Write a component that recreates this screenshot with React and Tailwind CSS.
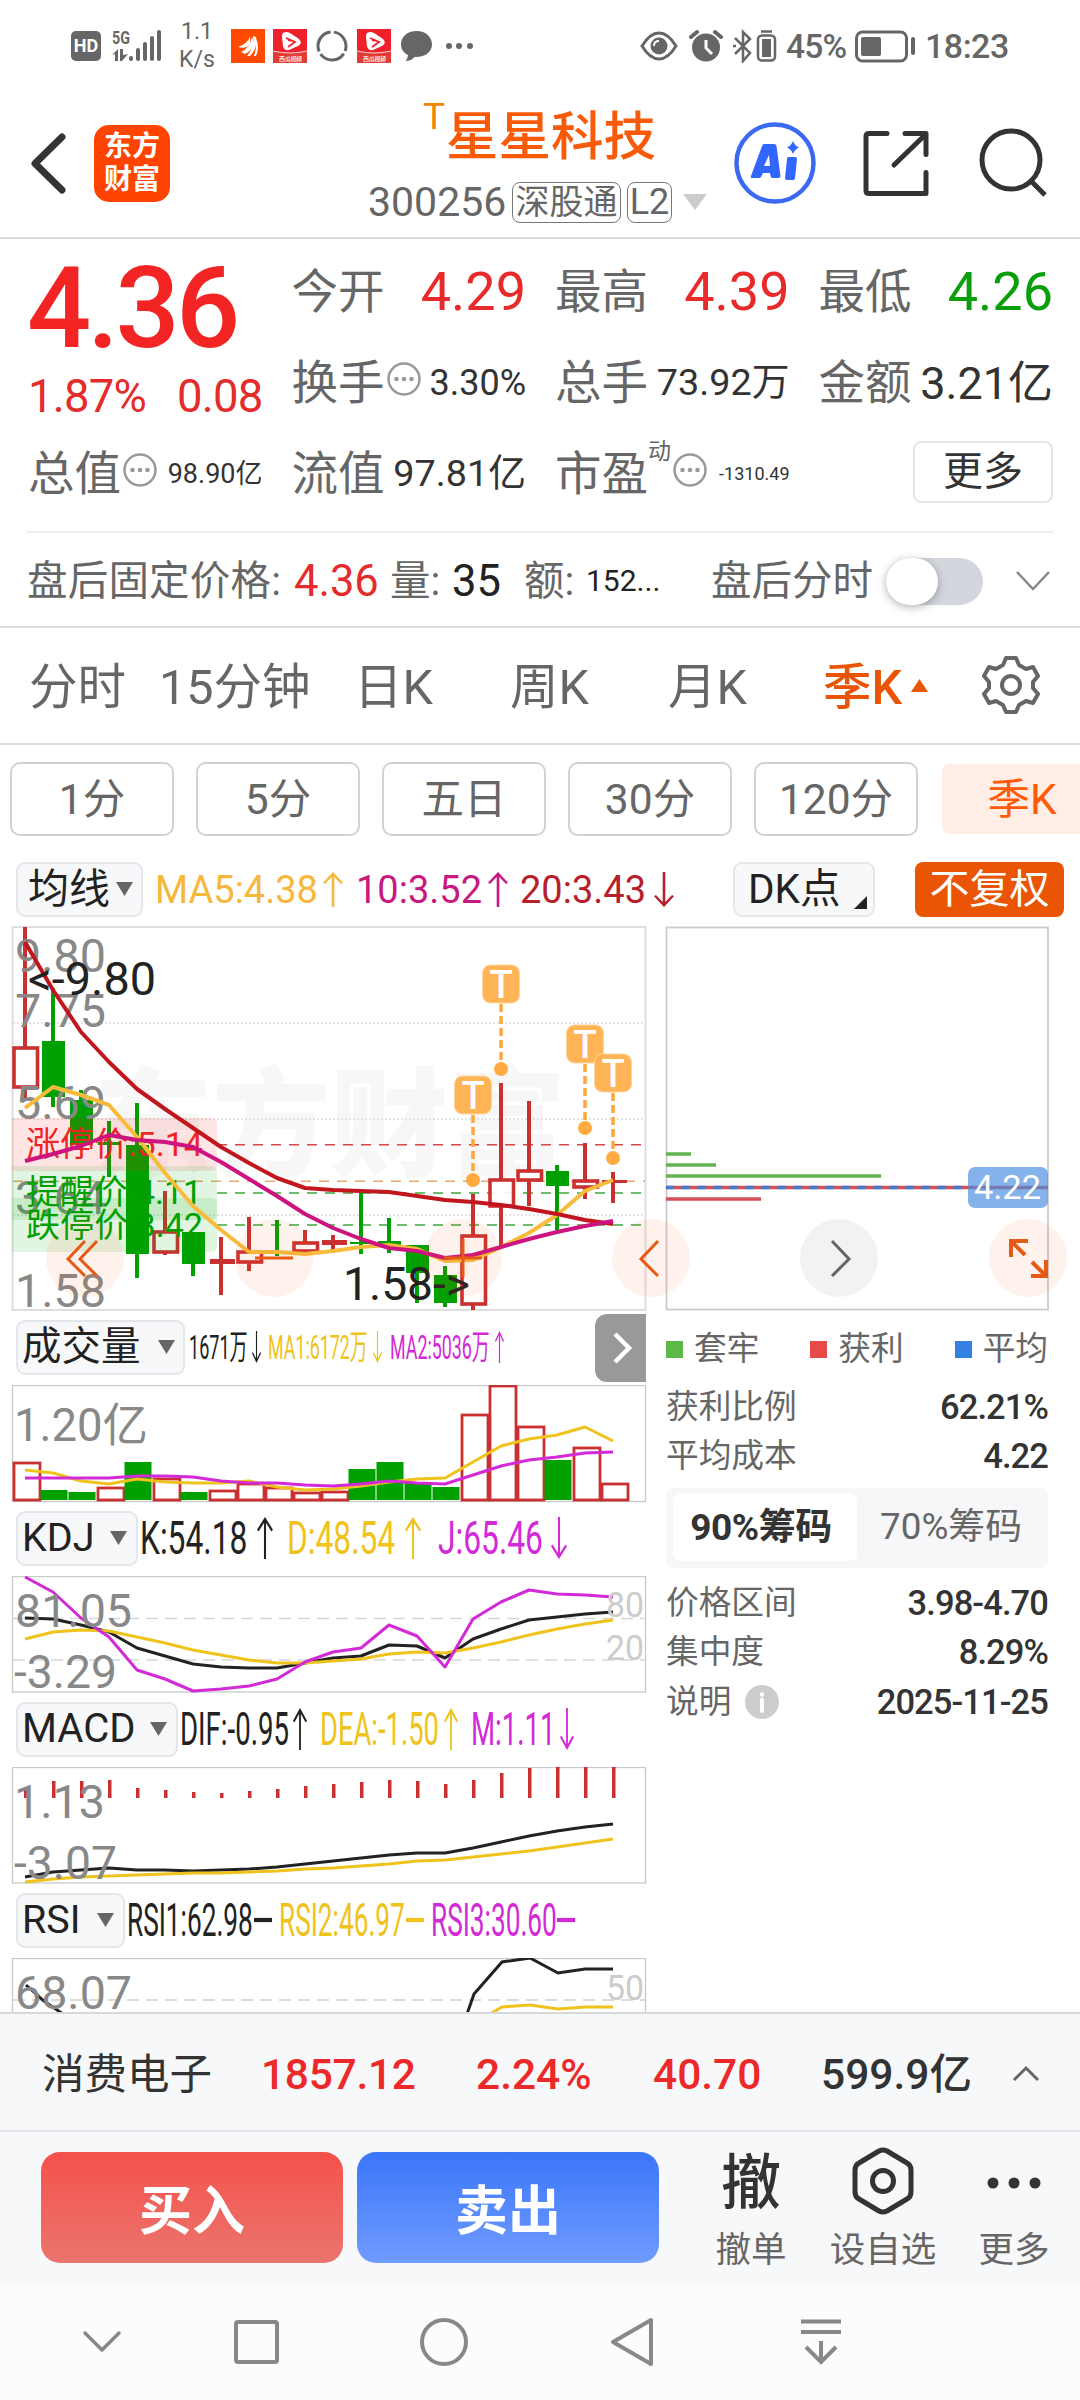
import clsx from 'clsx'

/* ── Series data (pixel space of the K-line canvas) ───────────────── */
const RED = '#cb3030'
const GREEN = '#00a000'
const cx = i => 25 + i * 28

// [type, high, bodyTop, bodyBottom, low]
const CANDLES = [
  ['r', 927, 1048, 1087, 1098], ['g', 988, 1041, 1097, 1107], ['g', 1090, 1100, 1145, 1148],
  ['g', 1121, 1142, 1145, 1177], ['g', 1103, 1145, 1254, 1278], ['r', 1191, 1232, 1252, 1255],
  ['g', 1232, 1232, 1264, 1276], ['R', 1237, 1259, 1264, 1295], ['r', 1217, 1252, 1262, 1271],
  ['g', 1220, 1252, 1254, 1256], ['r', 1230, 1243, 1251, 1253], ['R', 1235, 1240, 1245, 1253],
  ['g', 1193, 1242, 1244, 1254], ['g', 1218, 1241, 1245, 1253], ['g', 1245, 1245, 1273, 1303],
  ['g', 1266, 1275, 1303, 1307], ['r', 1194, 1236, 1304, 1310], ['r', 1083, 1180, 1206, 1247],
  ['r', 1101, 1171, 1180, 1206], ['g', 1165, 1171, 1186, 1230], ['r', 1143, 1181, 1187, 1199],
  ['R', 1172, 1180, 1183, 1203],
]
const MA5 = [1108, 1087, 1095, 1105, 1137, 1173, 1206, 1230, 1252, 1252, 1254, 1251, 1247, 1245, 1249, 1261, 1260, 1247, 1233, 1215, 1191, 1180]
const MA10 = [1161, 1154, 1146, 1135, 1140, 1142, 1147, 1162, 1179, 1196, 1214, 1228, 1239, 1248, 1251, 1258, 1255, 1247, 1239, 1232, 1226, 1221]
const MA20 = [942, 990, 1032, 1062, 1089, 1109, 1128, 1147, 1163, 1178, 1188, 1190, 1191, 1192, 1196, 1200, 1202, 1205, 1209, 1214, 1220, 1224]

const VOLUMES = [
  ['r', 1463], ['g', 1490], ['g', 1492], ['r', 1488], ['g', 1462], ['r', 1479], ['g', 1492], ['r', 1491],
  ['r', 1484], ['r', 1488], ['r', 1493], ['r', 1492], ['g', 1469], ['g', 1462], ['g', 1483], ['g', 1487],
  ['r', 1415], ['r', 1386], ['r', 1427], ['g', 1460], ['r', 1448], ['r', 1484],
]
const VOL_MA1 = [1470, 1473, 1481, 1484, 1479, 1482, 1483, 1483, 1481, 1487, 1490, 1489, 1486, 1482, 1479, 1478, 1462, 1446, 1439, 1435, 1427, 1441]
const VOL_MA2 = [1478, 1478, 1478, 1478, 1476, 1476, 1477, 1481, 1483, 1483, 1485, 1486, 1484, 1481, 1483, 1484, 1475, 1466, 1460, 1457, 1453, 1452]

const KDJ_K = [1618, 1619, 1625, 1632, 1648, 1656, 1664, 1667, 1668, 1668, 1663, 1658, 1656, 1645, 1646, 1658, 1639, 1629, 1620, 1617, 1614, 1612]
const KDJ_D = [1639, 1632, 1630, 1631, 1637, 1643, 1650, 1655, 1660, 1663, 1663, 1661, 1659, 1654, 1652, 1653, 1648, 1642, 1635, 1629, 1624, 1620]
const KDJ_J = [1577, 1592, 1618, 1637, 1670, 1679, 1691, 1689, 1686, 1679, 1662, 1652, 1648, 1625, 1636, 1667, 1619, 1602, 1590, 1594, 1595, 1597]

const MACD_BARS = [1787, 1781, 1781, 1780, 1788, 1790, 1792, 1793, 1791, 1789, 1786, 1784, 1782, 1780, 1781, 1784, 1780, 1773, 1768, 1767, 1767, 1767]
const DIF = [1877, 1872, 1870, 1868, 1870, 1870, 1871, 1870, 1869, 1867, 1864, 1861, 1858, 1855, 1853, 1853, 1848, 1842, 1836, 1831, 1827, 1824]
const DEA = [1882, 1879, 1877, 1876, 1875, 1874, 1873, 1873, 1872, 1871, 1869, 1868, 1866, 1864, 1861, 1860, 1857, 1854, 1851, 1847, 1843, 1839]

const T_MARKS = [[501, 984, 1069], [473, 1095, 1180], [585, 1044, 1128], [613, 1073, 1158]]

const TABS = [
  ['分时', 'w-[96px]'], ['15分钟', 'w-[150px] ml-[34px]'], ['日K', 'w-[78px] ml-[45px]'],
  ['周K', 'w-[80px] ml-[78px]'], ['月K', 'w-[80px] ml-[78px]'],
]

function Line({ data, color, width = 3.5 }) {
  return (
    <polyline
      points={data.map((y, i) => `${cx(i)},${y}`).join(' ')}
      fill="none" stroke={color} strokeWidth={width} strokeLinejoin="round"
    />
  )
}

function SvgText({ x, y, len, size = 46, fill = '#888', children, ...rest }) {
  return (
    <text x={x} y={y} textLength={len} lengthAdjust="spacingAndGlyphs" fontSize={size} fill={fill} {...rest}>
      {children}
    </text>
  )
}

function Frame({ y, h }) {
  return <rect x="12.5" y={y} width="633" height={h} fill="none" stroke="#c9c9c9" strokeWidth="1.3" />
}

/* ── Status bar ───────────────────────────────────────────────────── */
function VideoAppIcon({ className }) {
  return (
    <svg className={className} width="34" height="34" viewBox="0 0 34 34">
      <rect width="34" height="34" fill="#f01f2c" />
      <path d="M0 22q17 4 34 0v12H0z" fill="#e23a35" />
      <path d="M0 22q17 4 34 0" fill="none" stroke="#fff" strokeWidth="0.8" />
      <path d="M10 4q3-2 7 0l9 6q4 4-1 7l-9 4q-5 1-6-4l-1-9q0-3 1-4z" fill="#fff" />
      <path d="M13 9l9 4-7 5M18 12l-3-1" fill="none" stroke="#f01f2c" strokeWidth="1.8" />
      <text x="6" y="31.500" fontSize="6" fill="#fff" fontWeight="500" textLength="23">西瓜视频</text>
    </svg>
  )
}

function StatusBar() {
  return (
    <div className="flex h-[92px] items-center pl-[71px] text-[#666]">
      <div className="flex h-[30px] w-[30px] items-center justify-center rounded-[5px] bg-[#666] text-[19px] font-bold leading-none text-white">
        <span className="scale-x-95">HD</span>
      </div>
      <svg className="ml-[10px]" width="52" height="34" viewBox="111 30 52 34" fill="#666">
        <text x="112" y="45" fontSize="19" fontWeight="700" textLength="18" lengthAdjust="spacingAndGlyphs">5G</text>
        <path d="M112 56l6-6v12h-3v-7zM120 50h3v6l5-1-6 7h-2z" />
        <rect x="129" y="57" width="4" height="5" rx="2" />
        <rect x="136" y="49" width="4" height="13" rx="2" />
        <rect x="143" y="43" width="4" height="19" rx="2" />
        <rect x="150" y="37" width="4" height="25" rx="2" />
        <rect x="157" y="31" width="4" height="31" rx="2" />
      </svg>
      <div className="ml-[17px] flex w-[34px] flex-col items-center text-[23px] leading-[28px]">
        <span>1.1</span>
        <span>K/s</span>
      </div>
      <svg className="ml-[17px]" width="34" height="34" viewBox="0 0 34 34">
        <rect width="34" height="34" fill="#ff4a00" />
        <path d="M7 18q9-3 12-10 1 5-1 8-3 4-11 2z" fill="#fff" />
        <path d="M10 23q9-4 11-15 5 11-7 17zM16 27q8-9 6-20l3 1q2 11-6 19zM23 27q3-9 2-18 4 9 0 18z" fill="#fff" />
      </svg>
      <VideoAppIcon className="ml-[8px]" />
      <svg className="ml-[9px]" width="32" height="34" viewBox="0 0 32 34" fill="none" stroke="#666" strokeWidth="3">
        <circle cx="16" cy="17" r="14" strokeDasharray="25 3 27 3 26 4" transform="rotate(-82 16 17)" />
      </svg>
      <VideoAppIcon className="ml-[9px]" />
      <svg className="ml-[9px]" width="33" height="34" viewBox="0 0 33 34" fill="#666">
        <path d="M16.500 2C7 2 1 8 1 15.500c0 5 3 8.500 7 10.500-.5 3-1 4.500-2.500 6 4 0 7-1.500 9-4C25 28.500 32 23 32 15.500 32 8 26 2 16.500 2z" />
      </svg>
      <svg className="ml-[12px]" width="28" height="8" viewBox="0 0 28 8" fill="#666">
        <circle cx="4" cy="4" r="3" /><circle cx="14" cy="4" r="3" /><circle cx="25" cy="4" r="3" />
      </svg>
      <svg className="ml-[167px]" width="38" height="34" viewBox="0 0 38 34" fill="none" stroke="#666" strokeWidth="3">
        <path d="M2 17Q10 4 19 4t17 13Q28 30 19 30T2 17z" />
        <circle cx="19" cy="17" r="8.500" fill="#666" stroke="none" />
        <path d="M14 17q0-5 5-5" stroke="#fff" strokeWidth="1.800" />
      </svg>
      <svg className="ml-[11px]" width="34" height="34" viewBox="0 0 34 34" fill="#666">
        <circle cx="17" cy="18.500" r="14" />
        <path d="M2 8l6-5M26 3l6 5" stroke="#666" strokeWidth="4" strokeLinecap="round" />
        <path d="M17 11v8l6 6" fill="none" stroke="#fff" strokeWidth="3" />
      </svg>
      <svg className="ml-[9px]" width="46" height="34" viewBox="732 29 46 34" fill="none" stroke="#666" strokeWidth="2.500">
        <path d="M735 38l15 15-7 8V32l7 7-15 15M733 46h3" />
        <rect x="758" y="35.500" width="17" height="25" rx="4" />
        <rect x="762" y="39" width="9" height="18" fill="#666" stroke="none" />
        <path d="M761 31.500h11" />
      </svg>
      <span className="ml-[8px] w-[62px] pt-px text-[33.500px] font-medium leading-none tracking-[-0.8px]">45%</span>
      <svg className="ml-[6px]" width="62" height="34" viewBox="854 29 62 34" fill="none" stroke="#666" strokeWidth="3">
        <rect x="856.500" y="32" width="50" height="29" rx="6" />
        <rect x="861" y="37" width="20" height="19" rx="2" fill="#666" stroke="none" />
        <path d="M913 39v14" strokeWidth="4" strokeLinecap="round" />
      </svg>
      <span className="ml-[9px] pt-px text-[34px] font-medium leading-none tracking-[-0.500px]">18:23</span>
    </div>
  )
}

/* ── Title bar ────────────────────────────────────────────────────── */
function TitleBar() {
  return (
    <div className="flex h-[147px] items-start border-b-2 border-[#dcdcdc]">
      <svg className="ml-[28px] mt-[38px]" width="42" height="68" viewBox="28 130 42 68" fill="none" stroke="#333" strokeWidth="7" strokeLinecap="round" strokeLinejoin="round">
        <path d="M62 137L35 163.500 62 190" />
      </svg>
      <div className="ml-[24px] mt-[33px] flex h-[77px] w-[76px] flex-col items-center justify-center rounded-[15px] bg-[#ff4300] text-[28px] font-bold leading-[33px] text-white">
        <span>东方</span>
        <span>财富</span>
      </div>
      <div className="ml-[198px] flex w-[341px] flex-col">
        <div className="flex h-[85px] items-start pl-[55px]">
          <span className="mt-[6px] w-[23px] text-[37px] leading-none text-[#f08500]">T</span>
          <span className="mt-[19px] whitespace-nowrap text-[52.500px] font-medium leading-none text-[#f85a08]">星星科技</span>
        </div>
        <div className="flex h-[51px] items-center text-[#666]">
          <span className="w-[144px] text-[41px] leading-none">300256</span>
          <span className="flex h-[41px] w-[109px] items-center justify-center rounded-[8px] border border-[#777] text-[34px] leading-none">深股通</span>
          <span className="ml-[6px] flex h-[41px] w-[45px] items-center justify-center rounded-[8px] border border-[#777] text-[36px] leading-none">L2</span>
          <svg className="ml-[10px]" width="26" height="18" viewBox="0 0 26 18" fill="#ccc"><path d="M1 1h24L13 17z" /></svg>
        </div>
      </div>
      <svg className="ml-[25px] mt-[30px]" width="82" height="82" viewBox="734 122 82 82">
        <circle cx="775" cy="163" r="38.500" fill="none" stroke="#3b6af0" strokeWidth="4.500" />
        <g fill="#3366ff">
          <path fillRule="evenodd" d="M764 144h10q2 0 2.500 2l4 30q0 2-2 2h-6q-2 0-2-2l-.5-3h-7l-2 4q-.5 1-2 1h-7q-2 0-1-2l11-30q1-2 2-2zM769 155l-5 11h6z" />
          <path d="M788 157h7q2 0 2 2l-2 19q0 2-2 2h-6q-2 0-2-2l2-19q0-2 1-2z" />
          <path d="M793 141q2 5 6 6.500-4 1.500-6 6.500-2-5-6-6.500 4-1.500 6-6.500z" />
        </g>
      </svg>
      <svg className="ml-[45px] mt-[36px]" width="70" height="72" viewBox="861 128 70 72" fill="none" stroke="#333" strokeWidth="5" strokeLinecap="round" strokeLinejoin="round">
        <path d="M887 133.500h-18q-3 0-3 3v54q0 3 3 3h57v-21M905 133.500h21v21M925 135l-31 30" />
      </svg>
      <svg className="ml-[45px] mt-[36px]" width="74" height="74" viewBox="976 128 74 74" fill="none" stroke="#333" strokeWidth="5">
        <circle cx="1011" cy="160" r="29" />
        <path d="M1031 181l14 14" />
      </svg>
    </div>
  )
}

/* ── Quote panel ──────────────────────────────────────────────────── */
function Dots() {
  return (
    <svg className="shrink-0" width="36" height="36" viewBox="0 0 36 36" fill="#999">
      <circle cx="18" cy="18" r="15.500" fill="none" stroke="#999" strokeWidth="2.500" />
      <circle cx="10.500" cy="18" r="2.300" /><circle cx="18" cy="18" r="2.300" /><circle cx="25.500" cy="18" r="2.300" />
    </svg>
  )
}

function Quote({ label, value, size, color = 'text-[#333]', icon, sup }) {
  return (
    <div className="flex h-[91px] items-center whitespace-nowrap leading-none">
      <span className="text-[46.500px] text-[#666]">{label}</span>
      {sup && <span className="-mt-[45px] text-[23px] text-[#666]">{sup}</span>}
      {icon && <span className="-mt-[8px] ml-px"><Dots /></span>}
      <span className={clsx('ml-auto', size, color)}>{value}</span>
    </div>
  )
}

function QuotePanel() {
  return (
    <div className="border-b-2 border-[#dcdcdc] pt-[8px]">
      <div className="grid h-[284px] grid-cols-4 content-start gap-x-[29px] pl-[28px] pr-[27px]">
        <div className="row-span-2 leading-none text-[#f22424]">
          <div className="-ml-px pt-[5px] text-[113px] font-medium tracking-[-3.600px]">4.36</div>
          <div className="mt-[9px] flex justify-between text-[45.500px] tracking-[-0.800px] text-[#e32c2c]">
            <span>1.87%</span>
            <span>0.08</span>
          </div>
        </div>
        <Quote label="今开" value="4.29" size="text-[54px]" color="text-[#e82a2a]" />
        <Quote label="最高" value="4.39" size="text-[54px]" color="text-[#e82a2a]" />
        <Quote label="最低" value="4.26" size="text-[54px]" color="text-[#0a9e0a]" />
        <Quote label="换手" value="3.30%" size="text-[36px]" icon />
        <Quote label="总手" value="73.92万" size="text-[37.800px]" />
        <Quote label="金额" value="3.21亿" size="text-[45px]" />
        <Quote label="总值" value="98.90亿" size="text-[27px]" icon />
        <Quote label="流值" value="97.81亿" size="text-[37.800px]" />
        <Quote label="市盈" sup="动" value="-1310.49" size="text-[18px]" icon />
        <div className="ml-auto mt-[12px] flex h-[62px] w-[140px] items-center justify-center rounded-[8px] border-2 border-[#e5e5e5] pt-px text-[40px] leading-none text-[#333]">
          更多
        </div>
      </div>
      <div className="mx-[27px] flex h-[95px] items-center whitespace-nowrap border-t-2 border-[#ececec] pt-[4px] text-[40.500px] leading-none text-[#666]">
        <span className="w-[267px] tracking-[0.200px]">盘后固定价格:</span>
        <span className="w-[96px] text-[43.500px] text-[#e32c2c]">4.36</span>
        <span className="w-[62px]">量:</span>
        <span className="w-[72px] text-[43.500px] text-[#222]">35</span>
        <span className="w-[62px]">额:</span>
        <span className="w-[125px] text-[30px] text-[#222]">152...</span>
        <span className="w-[175px]">盘后分时</span>
        <span className="relative h-[47px] w-[97px] rounded-full bg-[#d3d6dc]">
          <span className="absolute left-0 top-0 h-[47px] w-[52px] rounded-full bg-white shadow-[0_2px_8px_rgba(0,0,0,0.3)]" />
        </span>
        <svg className="ml-[32px]" width="36" height="24" viewBox="0 0 36 24" fill="none" stroke="#888" strokeWidth="2.500"><path d="M2 3l16 17L34 3" /></svg>
      </div>
    </div>
  )
}

/* ── Period tabs ──────────────────────────────────────────────────── */
function PeriodTabs() {
  return (
    <>
      <div className="flex h-[117px] items-center whitespace-nowrap border-b-2 border-[#dcdcdc] pl-[29px] text-[48.500px] leading-none text-[#666]">
        {TABS.map(([label, pos]) => <span key={label} className={clsx('pt-[6px]', pos)}>{label}</span>)}
        <span className="ml-[75px] w-[80px] pt-[6px] font-medium text-[#e95504]">季K</span>
        <svg className="ml-[7px]" width="19" height="15" viewBox="0 0 19 15" fill="#e95504"><path d="M1 14L9.500 1 18 14z" /></svg>
        <svg className="ml-[52px]" width="60" height="60" viewBox="-30 -30 60 60" fill="none" stroke="#666" strokeWidth="4" strokeLinejoin="round">
          <path d="M-5-27H5L8-20 15-16 22-18 27-9 22-3V3L27 9 22 18 15 16 8 20 5 27H-5L-8 20-15 16-22 18-27 9-22 3V-3L-27-9-22-18-15-16-8-20z" />
          <circle r="9" />
        </svg>
      </div>
      <div className="flex h-[109px] items-start gap-[22px] overflow-hidden pl-[10px] pt-[17px] text-[42.500px] leading-none text-[#666]">
        {['1分', '5分', '五日', '30分', '120分'].map(label => (
          <span key={label} className="flex h-[74px] w-[164px] shrink-0 items-center justify-center rounded-[10px] border-2 border-[#d2d2d2] pt-[3px]">{label}</span>
        ))}
        <span className="ml-[2px] mt-[2px] flex h-[70px] w-[160px] shrink-0 items-center justify-center rounded-[7px] bg-[#ffeee6] pt-[3px] text-[#ff5a08]">季K</span>
      </div>
    </>
  )
}

/* ── Indicator headings ───────────────────────────────────────────── */
function Selector({ label, className }) {
  return (
    <span className={clsx('flex h-[55px] shrink-0 items-center justify-between whitespace-nowrap rounded-[9px] border-2 border-[#e4e6ea] bg-[#f7f8fa] leading-none text-[#222]', className)}>
      {label}
      <svg width="17" height="14" viewBox="0 0 17 14" fill="#666"><path d="M0 0h17L8.500 14z" /></svg>
    </span>
  )
}

function Trend({ dir, className }) {
  return (
    <svg className={clsx('shrink-0', className)} viewBox="0 0 20 40" preserveAspectRatio="none" fill="none" stroke="currentColor" strokeWidth="2.600">
      {dir === 'up' && <path d="M10 40V3M1 13l9-11 9 11" />}
      {dir === 'down' && <path d="M10 0v37M1 27l9 11 9-11" />}
      {dir === 'flat' && <path d="M0 20h20" strokeWidth="4" />}
    </svg>
  )
}

// narrow reading followed by a trend mark
function Reading({ text, dir, box, squeeze, mark, color }) {
  return (
    <span className={clsx('flex shrink-0 items-center leading-none', color)}>
      <span className={box}>
        <span className={clsx('inline-block origin-left whitespace-nowrap', squeeze)}>{text}</span>
      </span>
      <Trend dir={dir} className={mark} />
    </span>
  )
}

function MaBar() {
  return (
    <div className="flex h-[72px] items-start pl-[16px] pt-[8px]">
      <Selector label="均线" className="w-[127px] pl-[10px] pr-[8px] text-[41px]" />
      <div className="ml-[12px] flex h-[55px] w-[578px] items-center whitespace-nowrap pt-px text-[38px] leading-none">
        <span className="w-[168px] text-[#f5b83d]">MA5:4.38</span>
        <Trend dir="up" className="h-[35px] w-[20px] text-[#f5b83d]" />
        <span className="ml-[13px] w-[132px] text-[#c8197f]">10:3.52</span>
        <Trend dir="up" className="h-[35px] w-[20px] text-[#c8197f]" />
        <span className="ml-[12px] w-[134px] text-[#b5202b]">20:3.43</span>
        <Trend dir="down" className="h-[35px] w-[20px] text-[#b5202b]" />
      </div>
      <span className="relative flex h-[55px] w-[142px] items-center rounded-[9px] border-2 border-[#e4e6ea] bg-[#f7f8fa] pl-[13px] text-[40.500px] leading-none text-[#222]">
        DK点
        <svg className="absolute bottom-[6px] right-[6px]" width="13" height="13" viewBox="0 0 13 13" fill="#222"><path d="M13 0v13H0z" /></svg>
      </span>
      <span className="ml-[40px] flex h-[55px] w-[149px] items-center justify-center rounded-[8px] bg-[#e95504] pt-px text-[40px] leading-none text-white">不复权</span>
    </div>
  )
}

/* ── K-line chart ─────────────────────────────────────────────────── */
function Candle({ d, i }) {
  const [type, high, top, bottom, low] = d
  const x = cx(i)
  const color = type === 'g' ? GREEN : RED
  const hollow = type === 'r'
  return (
    <g stroke={color}>
      <path d={`M${x} ${high}V${top}M${x} ${bottom}V${low}`} strokeWidth="4" />
      {hollow
        ? <rect x={x - 11} y={top} width="23.500" height={bottom - top} fill="#fff" fillOpacity="0.900" strokeWidth="3.600" />
        : <rect x={x - 11} y={top} width={type === 'g' ? 23 : 25} height={bottom - top} fill={color} stroke="none" />}
    </g>
  )
}

function KLineChart() {
  return (
    <svg className="w-[651px] shrink-0" height="385" viewBox="0 926 651 385">
      <text x="94" y="1167" fontSize="118" fontWeight="900" fill="#f7f7f7" textLength="472">东方财富</text>
      <g stroke="#dcdcdc" strokeWidth="1.500" strokeDasharray="2 2">
        <path d="M13 1023H645M13 1119H645M13 1215H645" />
      </g>
      <rect x="12.500" y="927" width="633" height="383" fill="none" stroke="#dedede" strokeWidth="2" />
      <g strokeWidth="1.500" strokeDasharray="10 8">
        <path d="M217 1144.700H642" stroke="#d04848" />
        <path d="M13 1181.300H645" stroke="#e0aa70" />
        <path d="M217 1193H642M217 1225H642" stroke="#3ca83c" />
      </g>
      {CANDLES.map((d, i) => <Candle key={i} d={d} i={i} />)}

      <SvgText x="15" y="972" len="91">9.80</SvgText>
      <SvgText x="15" y="1027" len="91">7.75</SvgText>
      <SvgText x="15" y="1119" len="91">5.69</SvgText>
      <SvgText x="15" y="1214" len="91">3.64</SvgText>
      <SvgText x="15" y="1307" len="91">1.58</SvgText>

      <path d="M12 1118H211q6 0 6 6v41q0 6-6 6H12z" fill="#ff2020" fillOpacity="0.120" />
      <path d="M12 1166H211q6 0 6 6v42q0 6-6 6H12z" fill="#10b010" fillOpacity="0.120" />
      <path d="M12 1198H211q6 0 6 6v42q0 6-6 6H12z" fill="#10b010" fillOpacity="0.120" />
      <SvgText x="26" y="1156" len="177" size="34" fill="#ee2424">涨停价:5.14</SvgText>
      <SvgText x="26" y="1204" len="176" size="34" fill="#00a000">提醒价:4.11</SvgText>
      <SvgText x="26" y="1237" len="177" size="34" fill="#00a000">跌停价:3.42</SvgText>

      <Line data={MA5} color="#f8bc3c" width={4} />
      <Line data={MA20} color="#c2161f" width={4} />
      <Line data={MA10} color="#cc137f" width={4} />
      <SvgText x="28" y="995" len="128" fill="#222">{'<-9.80'}</SvgText>
      <SvgText x="343" y="1300" len="127" fill="#222">{'1.58->'}</SvgText>

      {T_MARKS.map(([x, y, dot]) => (
        <g key={x}>
          <path d={`M${x} ${y + 20}V${dot}`} stroke="#ffa838" strokeWidth="3.500" strokeDasharray="8 4" />
          <circle cx={x} cy={dot} r="7" fill="#ffab42" />
          <rect x={x - 18.500} y={y - 19} width="37" height="38" rx="8" fill="#ffb04d" fillOpacity="0.950" stroke="#ffd59b" strokeWidth="1" />
          <text x={x} y={y + 14} fontSize="38" fontWeight="500" fill="#fff" textAnchor="middle">T</text>
        </g>
      ))}
    </svg>
  )
}

function ChipChart() {
  return (
    <svg className="shrink-0" width="400" height="385" viewBox="651 926 400 385">
      <rect x="666.500" y="927.500" width="381.500" height="382" fill="none" stroke="#cbcbcb" strokeWidth="1.800" />
      <g strokeWidth="3.500">
        <path d="M666 1154H691M666 1165H716M666 1176H881" stroke="#62b450" />
        <path d="M666 1187.500H1048M666 1199H761" stroke="#d45055" />
        <path d="M666 1187.500H968" stroke="#3f7fd8" strokeDasharray="8 8" />
      </g>
      <rect x="968" y="1167" width="80" height="41" rx="7" fill="#4a8fe3" fillOpacity="0.680" />
      <SvgText x="974" y="1199" len="67" size="34" fill="#fff">4.22</SvgText>
    </svg>
  )
}

function RoundButton({ className, children }) {
  return (
    <span className={clsx('absolute top-[293px] h-[78px] w-[78px] rounded-full', className)}>
      <svg width="78" height="78" viewBox="-39 -39 78 78" fill="none" stroke="currentColor" strokeWidth="3">{children}</svg>
    </span>
  )
}

function ChartStage() {
  return (
    <div className="relative flex h-[386px]">
      <KLineChart />
      <ChipChart />
      <RoundButton className="left-[46px] bg-[#ff5a10]/8 text-[#e65a14]"><path d="M0-17L-17 1 0 18M12-17L-5 1 12 18" /></RoundButton>
      <RoundButton className="left-[235px] bg-[#ff5a10]/8 text-[#e65a14]"><path d="M-19 0H19" /></RoundButton>
      <RoundButton className="left-[424px] bg-[#ff5a10]/8 text-[#e65a14]"><path d="M-19 0H19M0-19V19" /></RoundButton>
      <RoundButton className="left-[612px] bg-[#ff5a10]/8 text-[#e65a14]"><path d="M7-17L-10 1 7 18" /></RoundButton>
      <RoundButton className="left-[800px] bg-black/5 text-[#666]"><path d="M-7-17L10 1-7 18" /></RoundButton>
      <RoundButton className="left-[989px] bg-[#ff5a10]/8 text-[#e65a14]">
        <g strokeWidth="4"><path d="M-17-1V-17H0M-16-16L-3-3M3 18H18V2M17 17L4 4" /></g>
      </RoundButton>
    </div>
  )
}

/* ── Sub-indicator panes ──────────────────────────────────────────── */
const BLACK = 'text-[#222]'
const GOLD = 'text-[#efc31c]'
const PINK = 'text-[#d22ad6]'

function VolumePane() {
  return (
    <>
      <div className="flex h-[73px] items-start pl-[16px]">
        <Selector label="成交量" className="mt-[8px] w-[169px] pl-[4px] pr-[8px] text-[39.500px]" />
        <div className="ml-[4px] mt-[8px] flex h-[55px] w-[406px] items-center text-[34px]">
          <Reading text="1671万" dir="down" box="w-[63px]" squeeze="scale-x-[0.530]" mark="h-[32px] w-[9px]" color={BLACK} />
          <span className="w-[7px]" />
          <Reading text="MA1:6172万" dir="down" box="w-[105px]" squeeze="scale-x-[0.525]" mark="h-[32px] w-[9px]" color={GOLD} />
          <span className="w-[8px]" />
          <Reading text="MA2:5036万" dir="up" box="w-[105px]" squeeze="scale-x-[0.525]" mark="h-[32px] w-[9px]" color={PINK} />
        </div>
        <span className="mt-[2px] flex h-[68px] w-[51px] items-center justify-center rounded-l-[12px] bg-[#999]">
          <svg className="ml-[4px]" width="22" height="34" viewBox="0 0 22 34" fill="none" stroke="#fff" strokeWidth="4.500"><path d="M3 3l14 14L3 31" /></svg>
        </span>
      </div>
      <svg width="651" height="118" viewBox="0 1385 651 118">
        <Frame y={1385.5} h={116} />
        {VOLUMES.map(([type, top], i) => type === 'g'
          ? <rect key={i} x={cx(i) + 15 - 27.500} y={top} width="27" height={1500 - top} fill={GREEN} />
          : <rect key={i} x={cx(i) - 11} y={top} width="26" height={1500 - top} fill="#fff" fillOpacity="0.800" stroke={RED} strokeWidth="2.800" />)}
        <Line data={VOL_MA1} color="#efc31c" width={3} />
        <Line data={VOL_MA2} color="#d22ad6" width={3} />
        <SvgText x="14" y="1441" len="134">1.20亿</SvgText>
      </svg>
    </>
  )
}

function KdjPane() {
  return (
    <>
      <div className="flex h-[73px] items-start pl-[16px] pt-[8px]">
        <Selector label="KDJ" className="w-[122px] pl-[4px] pr-[9px] text-[39.500px]" />
        <div className="ml-[2px] flex h-[55px] items-center text-[46px]">
          <Reading text="K:54.18" dir="up" box="w-[117px]" squeeze="scale-x-[0.690]" mark="h-[42px] w-[16px]" color={BLACK} />
          <span className="w-[14px]" />
          <Reading text="D:48.54" dir="up" box="w-[118px]" squeeze="scale-x-[0.690]" mark="h-[42px] w-[16px]" color={GOLD} />
          <span className="w-[17px]" />
          <Reading text="J:65.46" dir="down" box="w-[113px]" squeeze="scale-x-[0.690]" mark="h-[42px] w-[16px]" color={PINK} />
        </div>
      </div>
      <svg width="651" height="118" viewBox="0 1576 651 118">
        <Frame y={1576.5} h={115.5} />
        <path d="M13 1618.500H645M13 1660H645" stroke="#d6d6d6" strokeWidth="1.500" strokeDasharray="12 7" />
        <Line data={KDJ_K} color="#222" width={3} />
        <Line data={KDJ_D} color="#efc31c" width={3} />
        <Line data={KDJ_J} color="#d22ad6" width={3} />
        <SvgText x="606" y="1617" len="38" size="35" fill="#ccc">80</SvgText>
        <SvgText x="606" y="1660" len="38" size="35" fill="#ccc">20</SvgText>
        <SvgText x="15" y="1627" len="117">81.05</SvgText>
        <SvgText x="14" y="1688" len="103">-3.29</SvgText>
      </svg>
    </>
  )
}

function MacdPane() {
  return (
    <>
      <div className="flex h-[73px] items-start pl-[16px] pt-[8px]">
        <Selector label="MACD" className="w-[162px] pl-[4px] pr-[9px] text-[40px]" />
        <div className="ml-[2px] flex h-[55px] items-center text-[46px]">
          <Reading text="DIF:-0.95" dir="up" box="w-[113px]" squeeze="scale-x-[0.600]" mark="h-[42px] w-[14px]" color={BLACK} />
          <span className="w-[13px]" />
          <Reading text="DEA:-1.50" dir="up" box="w-[124px]" squeeze="scale-x-[0.595]" mark="h-[42px] w-[14px]" color={GOLD} />
          <span className="w-[13px]" />
          <Reading text="M:1.11" dir="down" box="w-[89px]" squeeze="scale-x-[0.600]" mark="h-[42px] w-[14px]" color={PINK} />
        </div>
      </div>
      <svg width="651" height="118" viewBox="0 1767 651 118">
        <Frame y={1767.5} h={115.500} />
        {MACD_BARS.map((top, i) => <rect key={i} x={cx(i) - 1} y={top} width="3.500" height={1798 - top} fill={RED} />)}
        <Line data={DIF} color="#222" width={3} />
        <Line data={DEA} color="#efc31c" width={3} />
        <SvgText x="14" y="1818" len="91">1.13</SvgText>
        <SvgText x="14" y="1879" len="103">-3.07</SvgText>
      </svg>
    </>
  )
}

function RsiPane() {
  return (
    <>
      <div className="flex h-[73px] items-start pl-[16px] pt-[8px]">
        <Selector label="RSI" className="w-[109px] pl-[4px] pr-[9px] text-[39.500px]" />
        <div className="ml-[2px] flex h-[55px] items-center text-[46px]">
          <Reading text="RSI1:62.98" dir="flat" box="w-[127px]" squeeze="scale-x-[0.570]" mark="h-[42px] w-[18px]" color={BLACK} />
          <span className="w-[7px]" />
          <Reading text="RSI2:46.97" dir="flat" box="w-[127px]" squeeze="scale-x-[0.570]" mark="h-[42px] w-[18px]" color={GOLD} />
          <span className="w-[7px]" />
          <Reading text="RSI3:30.60" dir="flat" box="w-[126px]" squeeze="scale-x-[0.570]" mark="h-[42px] w-[18px]" color={PINK} />
        </div>
      </div>
      <svg width="651" height="55" viewBox="0 1958 651 55">
        <Frame y={1958.500} h={115.500} />
        <path d="M13 2000H645" stroke="#cfcfcf" strokeWidth="1.500" strokeDasharray="12 7" />
        <g fill="none" strokeWidth="3">
          <path d="M26 1985L44 2001 63 2014M467 2014L474 1994 502 1962 530 1958 558 1973 585 1969H613" stroke="#222" />
          <path d="M490 2014L502 2007 530 2005 558 2009 585 2007H613" stroke="#efc31c" />
        </g>
        <SvgText x="606" y="2000" len="38" size="35" fill="#ccc">50</SvgText>
        <SvgText x="15" y="2009" len="117">68.07</SvgText>
      </svg>
    </>
  )
}

/* ── Chip distribution details ────────────────────────────────────── */
function Legend({ color, label }) {
  return (
    <span className="flex items-center">
      <span className={clsx('h-[17px] w-[17px]', color)} />
      <span className="ml-[11px]">{label}</span>
    </span>
  )
}

function Stat({ label, value, info }) {
  return (
    <div className="flex h-[49px] items-center">
      <span>{label}</span>
      {info && (
        <svg className="ml-[14px]" width="34" height="34" viewBox="0 0 34 34">
          <circle cx="17" cy="17" r="17" fill="#ccc" />
          <circle cx="17" cy="9.500" r="2.300" fill="#fff" />
          <path d="M17 14.500V26" stroke="#fff" strokeWidth="4" strokeLinecap="round" />
        </svg>
      )}
      <span className="ml-auto text-[34.500px] font-medium tracking-[-0.900px] text-[#333]">{value}</span>
    </div>
  )
}

function ChipPanel() {
  return (
    <div className="ml-[15px] w-[382px] whitespace-nowrap pt-[13px] text-[32.700px] leading-none text-[#666]">
      <div className="flex h-[49px] items-center justify-between">
        <Legend color="bg-[#5cb847]" label="套牢" />
        <Legend color="bg-[#e84a4a]" label="获利" />
        <Legend color="bg-[#3480e3]" label="平均" />
      </div>
      <div className="mt-[9px]">
        <Stat label="获利比例" value="62.21%" />
        <Stat label="平均成本" value="4.22" />
      </div>
      <div className="mt-[7px] flex h-[80px] items-center rounded-[7px] bg-[#f7f7fa] px-[7px] text-[36px]">
        <span className="flex h-[67px] w-[184px] items-center justify-center rounded-[7px] bg-white pr-[8px] text-[37px] font-bold tracking-[-0.500px] text-[#333]">90%筹码</span>
        <span className="flex flex-1 items-center justify-center pl-[4px] text-[36.800px]">70%筹码</span>
      </div>
      <div className="mt-[11px]">
        <Stat label="价格区间" value="3.98-4.70" />
        <Stat label="集中度" value="8.29%" />
        <div className="pt-[1px]"><Stat label="说明" value="2025-11-25" info /></div>
      </div>
    </div>
  )
}

/* ── Footer ───────────────────────────────────────────────────────── */
function SectorBar() {
  return (
    <div className="flex h-[120px] items-center whitespace-nowrap border-b-2 border-t-2 border-b-[#e4e6ea] border-t-[#d6d8da] bg-[#f7f8fa] pl-[42px] pt-[6px] text-[42.500px] font-medium leading-none text-[#ec2828]">
      <span className="w-[219px] font-normal text-[#333]">消费电子</span>
      <span className="w-[215px] tracking-[-0.300px]">1857.12</span>
      <span className="w-[177px]">2.24%</span>
      <span className="w-[168px]">40.70</span>
      <span className="w-[191px] text-[#333]">599.9亿</span>
      <svg className="-mt-[4px]" width="28" height="17" viewBox="0 0 28 17" fill="none" stroke="#666" strokeWidth="3"><path d="M2 15L14 3l12 12" /></svg>
    </div>
  )
}

function ActionBar() {
  return (
    <div className="flex h-[152px] items-start bg-[#f7f8fa] pl-[41px] pt-[20px] leading-none">
      <button className="h-[111px] w-[302px] rounded-[19px] bg-gradient-to-b from-[#f4504a] to-[#eb746e] pt-[9px] text-[53px] font-bold text-white">买入</button>
      <button className="ml-[14px] h-[111px] w-[302px] rounded-[19px] bg-gradient-to-b from-[#3a75f8] to-[#709bff] pt-[9px] text-[53px] font-bold text-white">卖出</button>
      <div className="-mt-[4px] ml-[47px] flex w-[90px] flex-col items-center text-[35.500px] text-[#666]">
        <span className="h-[85px] pt-[6px] text-[60px] font-medium text-[#333]">撤</span>
        <span>撤单</span>
      </div>
      <div className="-mt-[4px] ml-[32px] flex w-[110px] flex-col items-center text-[35.500px] text-[#666]">
        <span className="h-[85px] -mt-[2px] mb-[2px]">
          <svg width="66" height="70" viewBox="-33 -35 66 70" fill="none" stroke="#333" strokeWidth="5" strokeLinejoin="round">
            <path d="M-4-30q4-2 8 0l20 12q4 2 4 7v22q0 5-4 7L4 30q-4 2-8 0l-20-12q-4-2-4-7v-22q0-5 4-7z" />
            <circle r="10.500" />
          </svg>
        </span>
        <span>设自选</span>
      </div>
      <div className="-mt-[4px] ml-[31px] flex w-[90px] flex-col items-center text-[35.500px] text-[#666]">
        <span className="h-[85px] pt-[29px]">
          <svg width="54" height="12" viewBox="0 0 54 12" fill="#333"><circle cx="6" cy="6" r="5.500" /><circle cx="27" cy="6" r="5.500" /><circle cx="48" cy="6" r="5.500" /></svg>
        </span>
        <span>更多</span>
      </div>
    </div>
  )
}

function NavBar() {
  return (
    <div className="flex h-[116px] items-center bg-[#fcfcfc] pl-[80px] text-[#888]">
      <svg width="44" height="52" viewBox="80 2316 44 52" fill="none" stroke="currentColor" strokeWidth="3.500" strokeLinejoin="round" strokeLinecap="round"><path d="M85 2333l17 17 17-17" /></svg>
      <svg className="ml-[106px]" width="52" height="52" viewBox="230 2316 52 52" fill="none" stroke="currentColor" strokeWidth="4"><rect x="236" y="2322" width="41" height="40" rx="2" /></svg>
      <svg className="ml-[136px]" width="52" height="52" viewBox="418 2316 52 52" fill="none" stroke="currentColor" strokeWidth="4"><circle cx="444" cy="2342" r="22" /></svg>
      <svg className="ml-[138px]" width="50" height="52" viewBox="608 2316 50 52" fill="none" stroke="currentColor" strokeWidth="4" strokeLinejoin="round"><path d="M651 2320v44l-38-22z" /></svg>
      <svg className="ml-[140px]" width="48" height="52" viewBox="798 2316 48 52" fill="none" stroke="currentColor" strokeWidth="4"><path d="M801 2321.500h40M801 2332h40M821 2341v21M806 2347l15 15 15-15" /></svg>
    </div>
  )
}

export default function App() {
  return (
    <div className="flex h-[2400px] w-[1080px] flex-col overflow-hidden bg-white font-['Roboto','Noto_Sans_CJK_SC',sans-serif] [&_svg]:block">
      <StatusBar />
      <TitleBar />
      <QuotePanel />
      <PeriodTabs />
      <MaBar />
      <ChartStage />
      <div className="flex h-[701px] overflow-hidden">
        <div className="w-[651px] shrink-0">
          <VolumePane />
          <KdjPane />
          <MacdPane />
          <RsiPane />
        </div>
        <ChipPanel />
      </div>
      <SectorBar />
      <ActionBar />
      <NavBar />
    </div>
  )
}
